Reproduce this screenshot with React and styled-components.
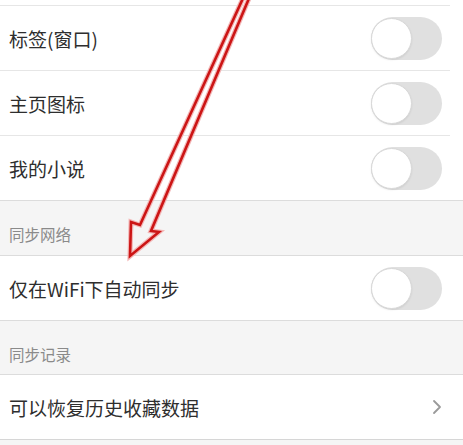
import styled, { createGlobalStyle } from "styled-components"

const GlobalStyle = createGlobalStyle`
    body {
        margin: 0;
        background: #ffffff;
        font-family: "Noto Sans CJK SC", "Noto Sans", sans-serif;
    }
`

const Toggle = ({on}) => {
    return(
        <Track on={on}>
            <Knob on={on}/>
        </Track>
    )
}

const Chevron = () => {
    return(
        <svg width="10" height="16" viewBox="0 0 10 16">
            <polyline points="2,2 8,8 2,14" fill="none" stroke="#9a9a9a" strokeWidth="1.8" strokeLinecap="round" strokeLinejoin="round"/>
        </svg>
    )
}

const Arrow = () => {
    return(
        <Overlay width="463" height="445" viewBox="0 0 463 445">
            <g fill="none" strokeLinejoin="miter" strokeLinecap="round">
                <path d="M244 -4 L140 225 L131 222 L130 256 L159 232 L151 231 L250 -4" stroke="#f3b7b7" strokeWidth="5"/>
                <path d="M244 -4 L140 225 L131 222 L130 256 L159 232 L151 231 L250 -4" stroke="#cc1515" strokeWidth="2.6"/>
            </g>
        </Overlay>
    )
}

const rows1 = ["标签(窗口)", "主页图标", "我的小说"]

const App = () => {
    return(
        <Page>
            <GlobalStyle/>
            <TopEdge/>
            {rows1.map((t, i) => (
                <Row key={t} last={i === rows1.length - 1}>
                    <Label>{t}</Label>
                    <Toggle/>
                </Row>
            ))}
            <Section h="56px">同步网络</Section>
            <Row last>
                <Label>仅在WiFi下自动同步</Label>
                <Toggle/>
            </Row>
            <Section h="55px">同步记录</Section>
            <Row last>
                <Label>可以恢复历史收藏数据</Label>
                <Chevron/>
            </Row>
            <Footer/>
            <Arrow/>
        </Page>
    )
}

export default App;

const Page = styled.div`
    position: relative;
    width: 463px;
    height: 445px;
    overflow: hidden;
    background: #ffffff;
`

const TopEdge = styled.div`
    height: 5px;
    margin-right: 13px;
    border-bottom: 1px solid #e6e6e6;
`

const Row = styled.div`
    height: 64px;
    display: flex;
    align-items: center;
    justify-content: space-between;
    padding: 0 8px 0 9px;
    margin-right: 13px;
    border-bottom: ${({last})=> last ? "none" : "1px solid #e6e6e6"};
`

const Label = styled.span`
    font-size: 19px;
    color: #2e2e2e;
`

const Section = styled.div`
    height: ${({h})=>h};
    box-sizing: border-box;
    display: flex;
    align-items: center;
    padding: 12px 0 0 9px;
    background: #f5f5f5;
    border-top: 1px solid #dcdcdc;
    border-bottom: 1px solid #dcdcdc;
    font-size: 15.5px;
    color: #8a8a8a;
`

const Footer = styled.div`
    height: 20px;
    background: #f5f5f5;
    border-top: 1px solid #d6d6d6;
`

const Track = styled.div`
    position: relative;
    width: 71px;
    height: 43px;
    border-radius: 22px;
    background: ${({on})=> on ? "#4cd964" : "#e0e0e0"};
`

const Knob = styled.div`
    position: absolute;
    top: 1px;
    left: ${({on})=> on ? "30px" : "0px"};
    width: 39px;
    height: 39px;
    border-radius: 50%;
    background: #ffffff;
    border: 1px solid #d8d8d8;
    box-shadow: 0 1px 2px rgba(0,0,0,0.08);
`

const Overlay = styled.svg`
    position: absolute;
    left: 0;
    top: 0;
    pointer-events: none;
`
